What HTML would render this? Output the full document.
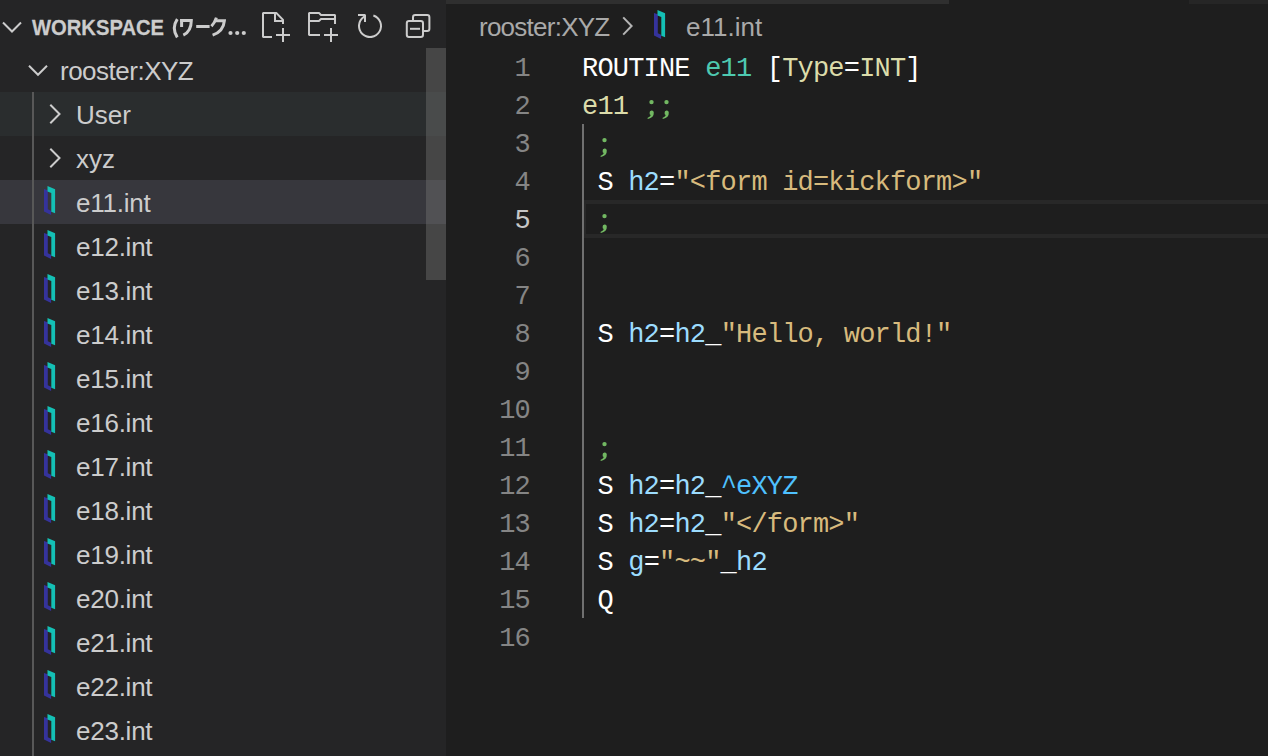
<!DOCTYPE html>
<html><head><meta charset="utf-8"><title>VS Code</title>
<style>
*{margin:0;padding:0;box-sizing:border-box}
html,body{width:1268px;height:756px;overflow:hidden;background:#1e1e1e}
body{position:relative;font-family:"Liberation Sans",sans-serif}
#side{position:absolute;left:0;top:0;width:446px;height:756px;background:#252526;overflow:hidden}
#editor{position:absolute;left:446px;top:0;width:822px;height:756px;background:#1e1e1e;overflow:hidden}
.abs{position:absolute}
.row{position:absolute;left:0;width:446px;height:44px}
.row .t{position:absolute;top:1px;line-height:44px;font-size:26px;color:#cccccc;white-space:nowrap}
.hover{background:#2a2d2e}
.sel{background:#37373d}
.bc{position:absolute;top:8px;line-height:38px;font-size:26px;color:#a9a9a9;white-space:nowrap}
.ln{position:absolute;left:0;width:84px;text-align:right;font-family:"Liberation Mono",monospace;font-size:27px;letter-spacing:-0.81px;color:#858585;line-height:38px;white-space:pre}
.code{position:absolute;left:136px;font-family:"Liberation Mono",monospace;font-size:27px;letter-spacing:-0.81px;color:#d4d4d4;line-height:38px;white-space:pre}
.w{color:#ffffff}.tl{color:#4ec9b0}.y{color:#dcdcaa}.g{color:transparent}.v{color:#9cdcfe}.s{color:#d7ba7d}.b{color:#4fc1ff}
</style></head><body>
<div id="side">
<svg class="abs" style="left:0;top:0" width="446" height="48" viewBox="0 0 446 48" fill="none" stroke="#cccccc"><path d="M3 22.5 L12 31.5 L21 22.5" stroke-width="2"/><path d="M177.3 19.2 Q171.2 28.2 177.3 37.3" stroke-width="3"/><path d="M181.6 19 V27" stroke-width="3"/><path d="M180.2 20.6 H191.3 Q191.3 31.5 183.3 35.2" stroke-width="3"/><path d="M196.2 26.5 H209.6" stroke-width="3"/><path d="M216.4 17.6 Q214.6 23 211.4 26.2" stroke-width="3"/><path d="M215.2 20.7 H224.4 Q223.5 31.5 212.6 35.2" stroke-width="3"/></svg>
<div class="abs" style="left:32px;top:13px;font-weight:bold;font-size:22px;color:#cccccc;line-height:26px;white-space:nowrap;transform-origin:0 0;transform:translate(0px,1px) scale(0.918,1.035);-webkit-text-stroke:0.25px #cccccc">WORKSPACE</div>
<svg class="abs" style="left:226px;top:29px" width="22" height="8" viewBox="0 0 22 8" fill="#cccccc"><circle cx="4.5" cy="4" r="2.1"/><circle cx="11.2" cy="4" r="2.1"/><circle cx="17.8" cy="4" r="2.1"/></svg>
<svg class="abs" style="left:258px;top:10px" width="32" height="32" viewBox="0 0 16 16" fill="#cccccc"><path d="M9.5 1.1l3.4 3.5.1.4v2h-1V6H8V2H3v11h4v1H2.5l-.5-.5v-12l.5-.5h6.7l.3.1zM9 2v3h2.9L9 2zm4 14h-1v-3H9v-1h3V9h1v3h3v1h-3v3z"/></svg>
<svg class="abs" style="left:306px;top:10px" width="32" height="32" viewBox="0 0 16 16" fill="#cccccc"><path d="M14.5 2H7.71l-.85-.85L6.51 1h-5l-.5.5v11l.5.5H7v-1H1.99V6h4.49l.35-.15.86-.86H14v1.5l-.001.51h1.011V2.5L14.5 2zm-.51 2h-6.5l-.35.15-.86.86H2v-3h4.29l.85.85.36.15H14l-.01.99zM13 16h-1v-3H9v-1h3V9h1v3h3v1h-3v3z"/></svg>
<svg class="abs" style="left:354px;top:10px" width="32" height="32" viewBox="0 0 16 16" fill="#cccccc"><path d="M4.681 3H2V2h3.5l.5.5V6H5V4a5 5 0 1 0 4.53-.761l.302-.954A6 6 0 1 1 4.681 3z"/></svg>
<svg class="abs" style="left:402px;top:10px" width="32" height="32" viewBox="0 0 16 16" fill="none" stroke="#cccccc" stroke-width="1"><rect x="5.5" y="2.5" width="8.2" height="8" rx="1.1"/><rect x="2.4" y="5.5" width="8.1" height="8" rx="1.1" fill="#252526"/><path d="M4 9.4h5"/></svg>
<div class="row" style="top:48px"><svg class="abs" style="left:26px;top:0" width="24" height="44" viewBox="0 0 24 44"><path d="M3 17.8 L12 26.8 L21 17.8" fill="none" stroke="#cccccc" stroke-width="2"/></svg><div class="t" style="left:60px;letter-spacing:-0.5px">rooster:XYZ</div></div>
<div class="row hover" style="top:92px"><svg class="abs" style="left:44px;top:0" width="18" height="44" viewBox="0 0 18 44"><path d="M6.3 12.8 L15.5 22 L6.3 31.2" fill="none" stroke="#cccccc" stroke-width="2"/></svg><div class="t" style="left:76px">User</div></div>
<div class="row" style="top:136px"><svg class="abs" style="left:44px;top:0" width="18" height="44" viewBox="0 0 18 44"><path d="M6.3 12.8 L15.5 22 L6.3 31.2" fill="none" stroke="#cccccc" stroke-width="2"/></svg><div class="t" style="left:76px">xyz</div></div>
<div class="row sel" style="top:180px"><svg class="abs" style="left:44px;top:6px" width="12" height="30" viewBox="0 0 12 30"><path d="M0 3 L3.8 4.2 L3.8 23.2 L7.1 24.8 L7.1 28.9 L0 25.5 Z" fill="#35339c"/><path d="M3.5 0 L11.1 3.2 L11.1 27.2 L7.3 25.7 L7.3 7 L3.5 5.4 Z" fill="#14c0b5"/></svg><div class="t" style="left:76px;letter-spacing:-0.25px">e11.int</div></div>
<div class="row" style="top:224px"><svg class="abs" style="left:44px;top:6px" width="12" height="30" viewBox="0 0 12 30"><path d="M0 3 L3.8 4.2 L3.8 23.2 L7.1 24.8 L7.1 28.9 L0 25.5 Z" fill="#35339c"/><path d="M3.5 0 L11.1 3.2 L11.1 27.2 L7.3 25.7 L7.3 7 L3.5 5.4 Z" fill="#14c0b5"/></svg><div class="t" style="left:76px;letter-spacing:-0.25px">e12.int</div></div>
<div class="row" style="top:268px"><svg class="abs" style="left:44px;top:6px" width="12" height="30" viewBox="0 0 12 30"><path d="M0 3 L3.8 4.2 L3.8 23.2 L7.1 24.8 L7.1 28.9 L0 25.5 Z" fill="#35339c"/><path d="M3.5 0 L11.1 3.2 L11.1 27.2 L7.3 25.7 L7.3 7 L3.5 5.4 Z" fill="#14c0b5"/></svg><div class="t" style="left:76px;letter-spacing:-0.25px">e13.int</div></div>
<div class="row" style="top:312px"><svg class="abs" style="left:44px;top:6px" width="12" height="30" viewBox="0 0 12 30"><path d="M0 3 L3.8 4.2 L3.8 23.2 L7.1 24.8 L7.1 28.9 L0 25.5 Z" fill="#35339c"/><path d="M3.5 0 L11.1 3.2 L11.1 27.2 L7.3 25.7 L7.3 7 L3.5 5.4 Z" fill="#14c0b5"/></svg><div class="t" style="left:76px;letter-spacing:-0.25px">e14.int</div></div>
<div class="row" style="top:356px"><svg class="abs" style="left:44px;top:6px" width="12" height="30" viewBox="0 0 12 30"><path d="M0 3 L3.8 4.2 L3.8 23.2 L7.1 24.8 L7.1 28.9 L0 25.5 Z" fill="#35339c"/><path d="M3.5 0 L11.1 3.2 L11.1 27.2 L7.3 25.7 L7.3 7 L3.5 5.4 Z" fill="#14c0b5"/></svg><div class="t" style="left:76px;letter-spacing:-0.25px">e15.int</div></div>
<div class="row" style="top:400px"><svg class="abs" style="left:44px;top:6px" width="12" height="30" viewBox="0 0 12 30"><path d="M0 3 L3.8 4.2 L3.8 23.2 L7.1 24.8 L7.1 28.9 L0 25.5 Z" fill="#35339c"/><path d="M3.5 0 L11.1 3.2 L11.1 27.2 L7.3 25.7 L7.3 7 L3.5 5.4 Z" fill="#14c0b5"/></svg><div class="t" style="left:76px;letter-spacing:-0.25px">e16.int</div></div>
<div class="row" style="top:444px"><svg class="abs" style="left:44px;top:6px" width="12" height="30" viewBox="0 0 12 30"><path d="M0 3 L3.8 4.2 L3.8 23.2 L7.1 24.8 L7.1 28.9 L0 25.5 Z" fill="#35339c"/><path d="M3.5 0 L11.1 3.2 L11.1 27.2 L7.3 25.7 L7.3 7 L3.5 5.4 Z" fill="#14c0b5"/></svg><div class="t" style="left:76px;letter-spacing:-0.25px">e17.int</div></div>
<div class="row" style="top:488px"><svg class="abs" style="left:44px;top:6px" width="12" height="30" viewBox="0 0 12 30"><path d="M0 3 L3.8 4.2 L3.8 23.2 L7.1 24.8 L7.1 28.9 L0 25.5 Z" fill="#35339c"/><path d="M3.5 0 L11.1 3.2 L11.1 27.2 L7.3 25.7 L7.3 7 L3.5 5.4 Z" fill="#14c0b5"/></svg><div class="t" style="left:76px;letter-spacing:-0.25px">e18.int</div></div>
<div class="row" style="top:532px"><svg class="abs" style="left:44px;top:6px" width="12" height="30" viewBox="0 0 12 30"><path d="M0 3 L3.8 4.2 L3.8 23.2 L7.1 24.8 L7.1 28.9 L0 25.5 Z" fill="#35339c"/><path d="M3.5 0 L11.1 3.2 L11.1 27.2 L7.3 25.7 L7.3 7 L3.5 5.4 Z" fill="#14c0b5"/></svg><div class="t" style="left:76px;letter-spacing:-0.25px">e19.int</div></div>
<div class="row" style="top:576px"><svg class="abs" style="left:44px;top:6px" width="12" height="30" viewBox="0 0 12 30"><path d="M0 3 L3.8 4.2 L3.8 23.2 L7.1 24.8 L7.1 28.9 L0 25.5 Z" fill="#35339c"/><path d="M3.5 0 L11.1 3.2 L11.1 27.2 L7.3 25.7 L7.3 7 L3.5 5.4 Z" fill="#14c0b5"/></svg><div class="t" style="left:76px;letter-spacing:-0.25px">e20.int</div></div>
<div class="row" style="top:620px"><svg class="abs" style="left:44px;top:6px" width="12" height="30" viewBox="0 0 12 30"><path d="M0 3 L3.8 4.2 L3.8 23.2 L7.1 24.8 L7.1 28.9 L0 25.5 Z" fill="#35339c"/><path d="M3.5 0 L11.1 3.2 L11.1 27.2 L7.3 25.7 L7.3 7 L3.5 5.4 Z" fill="#14c0b5"/></svg><div class="t" style="left:76px;letter-spacing:-0.25px">e21.int</div></div>
<div class="row" style="top:664px"><svg class="abs" style="left:44px;top:6px" width="12" height="30" viewBox="0 0 12 30"><path d="M0 3 L3.8 4.2 L3.8 23.2 L7.1 24.8 L7.1 28.9 L0 25.5 Z" fill="#35339c"/><path d="M3.5 0 L11.1 3.2 L11.1 27.2 L7.3 25.7 L7.3 7 L3.5 5.4 Z" fill="#14c0b5"/></svg><div class="t" style="left:76px;letter-spacing:-0.25px">e22.int</div></div>
<div class="row" style="top:708px"><svg class="abs" style="left:44px;top:6px" width="12" height="30" viewBox="0 0 12 30"><path d="M0 3 L3.8 4.2 L3.8 23.2 L7.1 24.8 L7.1 28.9 L0 25.5 Z" fill="#35339c"/><path d="M3.5 0 L11.1 3.2 L11.1 27.2 L7.3 25.7 L7.3 7 L3.5 5.4 Z" fill="#14c0b5"/></svg><div class="t" style="left:76px;letter-spacing:-0.25px">e23.int</div></div>
<div class="abs" style="left:32px;top:92px;width:2px;height:664px;background:#585858"></div>
<div class="abs" style="left:426px;top:48px;width:20px;height:232px;background:rgba(121,121,121,0.4)"></div>
</div>
<div id="editor">
<div class="abs" style="left:0;top:0;width:503px;height:4px;background:#2f2f2f"></div>
<div class="abs" style="left:743px;top:0;width:79px;height:4px;background:#262626"></div>
<div class="bc" style="left:33px;letter-spacing:-0.75px">rooster:XYZ</div>
<svg class="abs" style="left:172px;top:8px" width="16" height="32" viewBox="0 0 16 32"><path d="M5.2 9.4 L13.6 18 L5.2 26.6" fill="none" stroke="#b4b4b4" stroke-width="2"/></svg>
<svg class="abs" style="left:208px;top:10px" width="12" height="30" viewBox="0 0 12 30"><path d="M0 3 L3.8 4.2 L3.8 23.2 L7.1 24.8 L7.1 28.9 L0 25.5 Z" fill="#35339c"/><path d="M3.5 0 L11.1 3.2 L11.1 27.2 L7.3 25.7 L7.3 7 L3.5 5.4 Z" fill="#14c0b5"/></svg>
<div class="bc" style="left:240px">e11.int</div>
<div class="abs" style="left:136px;top:200px;width:686px;height:38px;border:4px solid #282828;border-right:none"></div>
<div class="abs" style="left:136px;top:124px;width:2px;height:494px;background:#707070"></div>
<svg class="abs" style="left:197.56px;top:86px" width="16" height="38" viewBox="0 0 16 38" fill="#72b862"><circle cx="7.5" cy="16.1" r="2.2"/><path d="M5.6 26.9 A2.1 2.1 0 0 1 9.8 26.5 Q10.1 31.6 3.9 33.1 L3.4 31.9 Q6.6 30.6 6.8 29 Q5.5 28.6 5.6 26.9 Z"/></svg>
<svg class="abs" style="left:212.95px;top:86px" width="16" height="38" viewBox="0 0 16 38" fill="#72b862"><circle cx="7.5" cy="16.1" r="2.2"/><path d="M5.6 26.9 A2.1 2.1 0 0 1 9.8 26.5 Q10.1 31.6 3.9 33.1 L3.4 31.9 Q6.6 30.6 6.8 29 Q5.5 28.6 5.6 26.9 Z"/></svg>
<svg class="abs" style="left:151.39px;top:124px" width="16" height="38" viewBox="0 0 16 38" fill="#72b862"><circle cx="7.5" cy="16.1" r="2.2"/><path d="M5.6 26.9 A2.1 2.1 0 0 1 9.8 26.5 Q10.1 31.6 3.9 33.1 L3.4 31.9 Q6.6 30.6 6.8 29 Q5.5 28.6 5.6 26.9 Z"/></svg>
<svg class="abs" style="left:151.39px;top:200px" width="16" height="38" viewBox="0 0 16 38" fill="#72b862"><circle cx="7.5" cy="16.1" r="2.2"/><path d="M5.6 26.9 A2.1 2.1 0 0 1 9.8 26.5 Q10.1 31.6 3.9 33.1 L3.4 31.9 Q6.6 30.6 6.8 29 Q5.5 28.6 5.6 26.9 Z"/></svg>
<svg class="abs" style="left:151.39px;top:428px" width="16" height="38" viewBox="0 0 16 38" fill="#72b862"><circle cx="7.5" cy="16.1" r="2.2"/><path d="M5.6 26.9 A2.1 2.1 0 0 1 9.8 26.5 Q10.1 31.6 3.9 33.1 L3.4 31.9 Q6.6 30.6 6.8 29 Q5.5 28.6 5.6 26.9 Z"/></svg>
<div class="ln" style="top:50px;color:#858585">1</div>
<div class="code" style="top:50px"><span class="w">ROUTINE</span> <span class="tl">e11</span> <span class="w">[</span><span class="y">Type</span><span class="w">=</span><span class="y">INT</span><span class="w">]</span></div>
<div class="ln" style="top:88px;color:#858585">2</div>
<div class="code" style="top:88px"><span class="y">e11</span> <span class="g">;;</span></div>
<div class="ln" style="top:126px;color:#858585">3</div>
<div class="code" style="top:126px"> <span class="g">;</span></div>
<div class="ln" style="top:164px;color:#858585">4</div>
<div class="code" style="top:164px"> <span class="w">S</span> <span class="v">h2</span><span class="w">=</span><span class="s">"&lt;form id=kickform&gt;"</span></div>
<div class="ln" style="top:202px;color:#c6c6c6">5</div>
<div class="code" style="top:202px"> <span class="g">;</span></div>
<div class="ln" style="top:240px;color:#858585">6</div>
<div class="ln" style="top:278px;color:#858585">7</div>
<div class="ln" style="top:316px;color:#858585">8</div>
<div class="code" style="top:316px"> <span class="w">S</span> <span class="v">h2</span><span class="w">=</span><span class="v">h2</span><span class="w">_</span><span class="s">"Hello, world!"</span></div>
<div class="ln" style="top:354px;color:#858585">9</div>
<div class="ln" style="top:392px;color:#858585">10</div>
<div class="ln" style="top:430px;color:#858585">11</div>
<div class="code" style="top:430px"> <span class="g">;</span></div>
<div class="ln" style="top:468px;color:#858585">12</div>
<div class="code" style="top:468px"> <span class="w">S</span> <span class="v">h2</span><span class="w">=</span><span class="v">h2</span><span class="w">_</span><span class="b">^eXYZ</span></div>
<div class="ln" style="top:506px;color:#858585">13</div>
<div class="code" style="top:506px"> <span class="w">S</span> <span class="v">h2</span><span class="w">=</span><span class="v">h2</span><span class="w">_</span><span class="s">"&lt;/form&gt;"</span></div>
<div class="ln" style="top:544px;color:#858585">14</div>
<div class="code" style="top:544px"> <span class="w">S</span> <span class="v">g</span><span class="w">=</span><span class="s">"~~"</span><span class="w">_</span><span class="v">h2</span></div>
<div class="ln" style="top:582px;color:#858585">15</div>
<div class="code" style="top:582px"> <span class="w">Q</span></div>
<div class="ln" style="top:620px;color:#858585">16</div>
</div>
</body></html>
